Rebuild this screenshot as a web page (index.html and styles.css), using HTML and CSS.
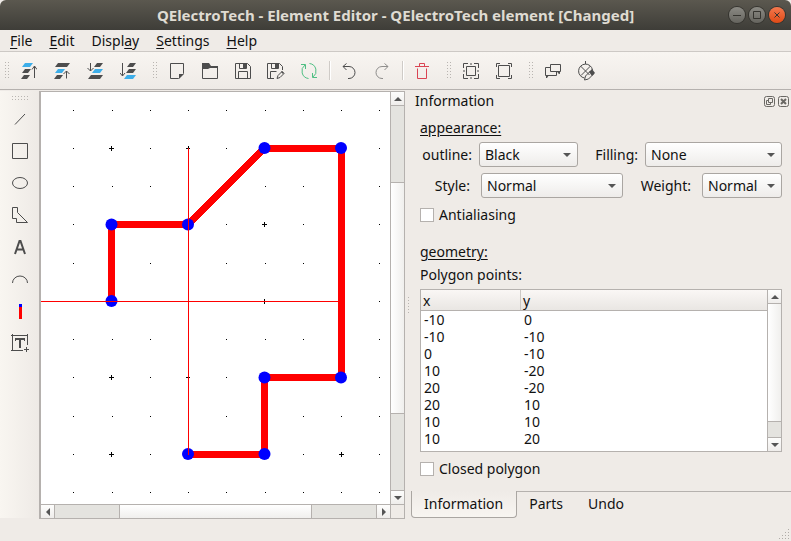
FILE: index.html
```
<!DOCTYPE html>
<html lang="en">
<head>
    <meta charset="UTF-8">
    <meta name="viewport" content="width=device-width, initial-scale=1.0">
    <title>QElectroTech - Element Editor</title>
    <link rel="stylesheet" href="styles.css">
</head>
<body>

    <header class="titlebar">
        <h1 class="title">QElectroTech - Element Editor - QElectroTech element [Changed]</h1>
        <div class="win-buttons">
            <button class="win-btn" aria-label="Minimize"><svg width="16" height="16"><path d="M4 8.5h8"/></svg></button>
            <button class="win-btn" aria-label="Maximize"><svg width="16" height="16"><path d="M4.500 4.500h7v7h-7z"/></svg></button>
            <button class="win-btn close" aria-label="Close"><svg width="16" height="16"><path d="M5.500 5.500l5 5M10.500 5.500l-5 5"/></svg></button>
        </div>
    </header>

    <nav class="menubar">
        <button><u>F</u>ile</button>
        <button><u>E</u>dit</button>
        <button>Displ<u>a</u>y</button>
        <button><u>S</u>ettings</button>
        <button><u>H</u>elp</button>
    </nav>

    <div class="toolbar">
        <span class="grip first"></span>
        <button class="tool" aria-label="Bring to front"><svg class="icon" viewBox="0 0 16 16"><path class="blue" d="M4 0h8l-3 4H1z"/><path class="dark" d="M4 6h6l-3 4H1zM3 12h6l-3 4H0z"/><path d="M13.500 15V3M11 6.500L13.500 3 16 6.500"/></svg></button>
        <button class="tool" aria-label="Raise"><svg class="icon" viewBox="0 0 16 16"><path class="dark" d="M4 0h12l-3 4H1zM3 12h6l-3 4H0z"/><path class="blue" d="M4 6h7l-3 4H1z"/><path d="M12.500 15.500V8M9.500 11l3-3 3 3"/></svg></button>
        <button class="tool" aria-label="Lower"><svg class="icon" viewBox="0 0 16 16"><path class="dark" d="M10 0h6l-3 4H7zM4 12h12l-3 4H1z"/><path class="blue" d="M8 6h8l-3 4H5z"/><path d="M3.500 0v8M.5 5l3 3 3-3"/></svg></button>
        <button class="tool" aria-label="Send to back"><svg class="icon" viewBox="0 0 16 16"><path class="dark" d="M10 0h6l-3 4H7zM9 6h7l-3 4H6z"/><path class="blue" d="M7 12h9l-3 4H4z"/><path d="M2.500 0v13M0 10l2.500 3L5 10"/></svg></button>
        <span class="grip"></span>
        <button class="tool" aria-label="New"><svg class="icon" viewBox="0 0 16 16"><path d="M1.500.5h13v10l-5 5h-8z"/><path class="dark" d="M10 11h5l-5 5z"/></svg></button>
        <button class="tool" aria-label="Open"><svg class="icon" viewBox="0 0 16 16"><path d="M.5.5v15h15v-12h-7"/><path class="dark" d="M0 0h7l2 3h7v2H8L6 6H0z"/></svg></button>
        <button class="tool" aria-label="Save"><svg class="icon" viewBox="0 0 16 16"><path d="M.5.5h12l3 3v12H.5zM4.500.5v5h7v-5M3.500 15.500v-7h9v7"/><path class="dark" d="M8 1h3v4H8z"/></svg></button>
        <button class="tool" aria-label="Save as"><svg class="icon save-as" viewBox="0 0 18 16"><path d="M7 15.500H.5V.5h12l3 3V7M4.500.5v5h7v-5M3.500 15.500v-7h6M10 15.500l1-3 4-4 2 2-4 4z"/><path class="dark" d="M8 1h3v4H8zM14 9l1-1 2 2-1 1z"/></svg></button>
        <button class="tool green" aria-label="Reload"><svg class="icon" viewBox="0 0 16 16"><path d="M8.500.5a7.500 7.500 0 0 1 3.500 13.500M11.500 10v4.500H16M7.500 15.500A7.500 7.500 0 0 1 4 2M4.500 6V1.500H0"/></svg></button>
        <span class="sep"></span>
        <button class="tool" aria-label="Undo"><svg class="icon" viewBox="0 0 16 16"><path d="M2 3.500h6a6 6 0 0 1 0 12H7M5.500.5l-3.500 3 3.500 3.500"/></svg></button>
        <button class="tool faded" aria-label="Redo"><svg class="icon" viewBox="0 0 16 16"><path d="M14 3.500H8a6 6 0 0 0 0 12h1M10.500.5l3.500 3-3.500 3.500"/></svg></button>
        <span class="sep"></span>
        <button class="tool red" aria-label="Delete"><svg class="icon" viewBox="0 0 16 16"><path d="M1 3.500h14M5.500 3V.5h5V3M3.500 5.500v10h9v-10"/></svg></button>
        <span class="grip"></span>
        <button class="tool" aria-label="Select all"><svg class="icon" viewBox="0 0 16 16"><path d="M.5 5V.5H5M11 .5h4.500V5M15.500 11v4.500H11M5 15.500H.5V11M3.500 3.500h9v9h-9zM7 1h2M7 15h2M1 7v2M15 7v2"/></svg></button>
        <button class="tool" aria-label="Deselect"><svg class="icon" viewBox="0 0 16 16"><path d="M.5 4V.5H4M12 .5h3.500V4M15.500 12v3.500H12M4 15.500H.5V12M2.500 2.500h11v11h-11z"/></svg></button>
        <span class="grip"></span>
        <button class="tool" aria-label="Names"><svg class="icon" viewBox="0 0 16 16"><path d="M5.500 1.500h10v7h-10zM5 4.500H.5v8h11V9M1.500 12v2M14 9v2"/><path class="dark" d="M1 12h3l-2 3H1zM12 9h3v2z"/></svg></button>
        <button class="tool" aria-label="Authors"><svg class="icon wide" viewBox="0 0 18 20"><path d="M8.500 0v3M15.500 9a7 7 0 1 0-8 8M3.500 5l9 9M13.500 5L4 14.500M7.500 19l1-4 5-5 3 3-5 5z"/><path class="dark" d="M12 11l3-3 3 4-3 3z"/></svg></button>
    </div>

    <main class="workspace">
        <div class="shapes">
            <span class="grip-h"></span>
            <button class="tool" aria-label="Line"><svg class="icon" viewBox="0 0 16 16"><path d="M3 13.500L13 3"/></svg></button>
            <button class="tool" aria-label="Rectangle"><svg class="icon" viewBox="0 0 16 16"><path d="M.5.5h15v15H.5z"/></svg></button>
            <button class="tool" aria-label="Ellipse"><svg class="icon" viewBox="0 0 16 16"><ellipse cx="8" cy="8" rx="7.500" ry="5.500"/></svg></button>
            <button class="tool" aria-label="Polygon"><svg class="icon" viewBox="0 0 16 16"><path d="M.5.5h5v5l10 10H4.500v-4h-4z"/></svg></button>
            <button class="tool" aria-label="Text"><svg class="icon" viewBox="0 0 16 16"><path class="thick" d="M3 15L7.500 2h1L13 15M4.500 10.500h7"/></svg></button>
            <button class="tool" aria-label="Arc"><svg class="icon" viewBox="0 0 16 16"><path d="M.5 12a7.500 7 0 0 1 15 0"/></svg></button>
            <button class="tool" aria-label="Terminal"><svg class="icon" viewBox="0 0 16 16"><path fill="#f00" stroke="none" d="M7 4h3v12H7z"/><path fill="#00f" stroke="none" d="M7 1h3v3H7z"/></svg></button>
            <button class="tool" aria-label="Text field"><svg class="icon big" viewBox="0 0 18 18"><path d="M0 1.500h17M1.500 0v17M0 16.500h12M16.500 0v11M13 15.500h5M15.500 13v5"/><path class="dark" d="M4 4h10v3h-1V6h-3v8H8V6H5v1H4z"/></svg></button>
        </div>

        <div class="editor">
            <svg class="canvas">
                <defs>
                    <path id="minor" d="M32 .5h1M71 .5h1M109 .5h1M147 .5h1M185 .5h1M224 .5h1M262 .5h1M300 .5h1M338 .5h1"/>
                    <path id="major" d="M32 .5h1M109 .5h1M185 .5h1M262 .5h1M338 .5h1M68 .5h5M70.500-2v5M145 .5h4M147-2v4M221 .5h5M223.500-2v5M298 .5h5M300.500-2v5"/>
                </defs>
                <g class="grid">
                    <use href="#minor" y="18"/>
                    <use href="#major" y="56"/>
                    <use href="#minor" y="94"/>
                    <use href="#major" y="132"/>
                    <use href="#minor" y="171"/>
                    <use href="#major" y="209"/>
                    <use href="#minor" y="247"/>
                    <use href="#major" y="285"/>
                    <use href="#minor" y="324"/>
                    <use href="#major" y="362"/>
                    <use href="#minor" y="400"/>
                </g>
                <path class="polygon" d="M70.500 209v-76.500H147L223.500 56H300v229.500h-76.500V362H147"/>
                <g class="handles">
                    <circle cx="70.500" cy="209" r="6"/>
                    <circle cx="70.500" cy="132.500" r="6"/>
                    <circle cx="147" cy="132.500" r="6"/>
                    <circle cx="223.500" cy="56" r="6"/>
                    <circle cx="300" cy="56" r="6"/>
                    <circle cx="300" cy="285.500" r="6"/>
                    <circle cx="223.500" cy="285.500" r="6"/>
                    <circle cx="223.500" cy="362" r="6"/>
                    <circle cx="147" cy="362" r="6"/>
                </g>
                <path class="axis" d="M0 209.500h300M147.500 56v307"/>
            </svg>
            <div class="scroll-v">
                <button class="arrow up" aria-label="Scroll up"></button>
                <div class="trough v"><div class="thumb"></div></div>
                <button class="arrow down" aria-label="Scroll down"></button>
            </div>
            <div class="scroll-h">
                <button class="arrow left" aria-label="Scroll left"></button>
                <div class="trough h"><div class="thumb"></div></div>
                <button class="arrow right" aria-label="Scroll right"></button>
            </div>
            <div class="corner"></div>
        </div>

        <div class="splitter"></div>

        <section class="dock">
            <div class="dock-title">
                <h2>Information</h2>
                <button class="dock-btn" aria-label="Float"><svg width="11" height="11"><rect x=".5" y=".5" width="10" height="10" rx="2"/><path d="M4.500 2.500h4v4h-4zM4 4.500H2.500v4h4V7"/></svg></button>
                <button class="dock-btn" aria-label="Close panel"><svg width="11" height="11"><rect x=".5" y=".5" width="10" height="10" rx="2"/><path class="cross" d="M3 3l5 5M8 3L3 8"/></svg></button>
            </div>

            <div class="panel">
                <h3>appearance:</h3>
                <div class="row colors">
                    <label for="outline">outline:</label>
                    <span class="combo"><select id="outline"><option>Black</option></select></span>
                    <label for="filling">Filling:</label>
                    <span class="combo"><select id="filling"><option>None</option></select></span>
                </div>
                <div class="row lines">
                    <label for="style">Style:</label>
                    <span class="combo"><select id="style"><option>Normal</option></select></span>
                    <label for="weight">Weight:</label>
                    <span class="combo"><select id="weight"><option>Normal</option></select></span>
                </div>
                <label class="check"><input type="checkbox">Antialiasing</label>

                <h3 class="geometry">geometry:</h3>
                <p class="caption">Polygon points:</p>
                <div class="points">
                    <table>
                        <thead>
                            <tr><th>x</th><th>y</th></tr>
                        </thead>
                        <tbody>
                            <tr><td>-10</td><td>0</td></tr>
                            <tr><td>-10</td><td>-10</td></tr>
                            <tr><td>0</td><td>-10</td></tr>
                            <tr><td>10</td><td>-20</td></tr>
                            <tr><td>20</td><td>-20</td></tr>
                            <tr><td>20</td><td>10</td></tr>
                            <tr><td>10</td><td>10</td></tr>
                            <tr><td>10</td><td>20</td></tr>
                        </tbody>
                    </table>
                    <div class="scroll-v">
                        <button class="arrow up" aria-label="Scroll up"></button>
                        <div class="trough list"><div class="thumb"></div></div>
                        <button class="arrow down" aria-label="Scroll down"></button>
                    </div>
                </div>
                <label class="check"><input type="checkbox">Closed polygon</label>
            </div>

            <div class="tabs">
                <button class="tab active">Information</button>
                <button class="tab">Parts</button>
                <button class="tab">Undo</button>
            </div>
        </section>
    </main>

    <footer class="statusbar">
        <svg width="12" height="12"><path d="M10 1.500h1M7 4.500h1M10 4.500h1M4 7.500h1M7 7.500h1M10 7.500h1M1 10.500h1M4 10.500h1M7 10.500h1M10 10.500h1"/></svg>
    </footer>

</body>
</html>
```

FILE: styles.css
```
* {
    box-sizing: border-box;
}

body {
    margin: 0;
    min-height: 100vh;
    display: flex;
    flex-direction: column;
    background: #efebe7;
    color: #111;
    font: 14px/20px "Noto Sans", "Open Sans", sans-serif;
}

button {
    margin: 0;
    padding: 0;
    border: 0;
    background: none;
    color: inherit;
    font: inherit;
}

svg {
    display: block;
    fill: none;
    stroke: #4d4d4d;
}

h2, h3, p {
    margin: 0;
    font-size: 14px;
    font-weight: 400;
}

/* title bar */
.titlebar {
    display: grid;
    grid-template-columns: 64px 1fr 64px;
    align-items: center;
    height: 30px;
    padding-right: 6px;
    border-radius: 6px 6px 0 0;
    background: linear-gradient(#5b584f, #3e3d38);
}

.title {
    grid-column: 2;
    margin: 0;
    padding-left: 6px;
    color: #dfdbd2;
    font-size: 15px;
    line-height: 20px;
    text-align: center;
    white-space: nowrap;
}

.win-buttons {
    display: flex;
    justify-content: flex-end;
    gap: 4px;
}

.win-btn {
    width: 16px;
    height: 16px;
    border-radius: 50%;
    background: linear-gradient(#8b8a84, #65645e);
    box-shadow: 0 0 0 1px #35342f;
}

.win-btn svg {
    stroke: #35342f;
}

.win-btn.close {
    background: linear-gradient(#f4784e, #df4a16);
}

/* menus */
.menubar {
    display: flex;
    gap: 17px;
    height: 22px;
    padding: 1px 10px 0;
    border-bottom: 1px solid #cdc9c5;
}

.menubar u {
    text-underline-offset: 2px;
}

/* toolbars */
.toolbar {
    display: flex;
    align-items: center;
    gap: 1px;
    height: 38px;
    border-bottom: 1px solid #b5b1ae;
    background: linear-gradient(#f8f5f1, #eeeae6);
}

.tool {
    display: flex;
    align-items: center;
    justify-content: center;
    flex: none;
    width: 32px;
    height: 32px;
}

.icon {
    width: 16px;
    height: 16px;
}

.icon.big {
    width: 18px;
    height: 18px;
}

.icon.wide {
    width: 18px;
    height: 20px;
}

.icon.save-as {
    width: 18px;
}

.dark {
    fill: #4d4d4d;
    stroke: none;
}

.blue {
    fill: #3daee9;
    stroke: none;
}

.thick {
    stroke-width: 2;
}

.green svg {
    stroke: #4fbf83;
}

.red svg {
    stroke: #da4453;
}

.faded {
    opacity: 0.6;
}

.grip {
    width: 15px;
    height: 17px;
    padding: 0 2px 0 8px;
    background: conic-gradient(from 270deg at 1px 1px, #b9b5b1 90deg, transparent 0) 0 0 / 3px 3px content-box;
}

.grip.first {
    width: 12px;
    padding-left: 5px;
}

.sep {
    width: 6px;
    height: 19px;
    padding: 0 1px 0 3px;
    background: linear-gradient(90deg, #cfcbc7 1px, #fff 1px) content-box;
}

.workspace {
    flex: 1;
    display: flex;
    padding-top: 1px;
}

.shapes {
    display: flex;
    flex-direction: column;
    align-items: center;
    width: 39px;
    margin-bottom: 1px;
    padding-left: 1px;
    background: linear-gradient(90deg, #f9f6f1, #eeeae6);
}

.grip-h {
    width: 17px;
    height: 12px;
    padding: 5px 0 3px;
    background: conic-gradient(from 270deg at 1px 1px, #b9b5b1 90deg, transparent 0) 0 0 / 3px 3px content-box;
}

/* drawing area */
.editor {
    flex: 1;
    display: grid;
    grid-template-columns: 1fr 14px;
    grid-template-rows: 1fr 14px;
    border: 1px solid #b5b1ae;
    border-left-width: 2px;
    background: #fff;
}

.canvas {
    width: 100%;
    height: 100%;
    min-height: 411px;
}

.grid {
    stroke: #000;
    shape-rendering: crispEdges;
}

.polygon {
    stroke: #f00;
    stroke-width: 7;
    shape-rendering: crispEdges;
}

.handles {
    fill: #00f;
    stroke: none;
}

.axis {
    stroke: #f00;
}

/* scroll bars */
.scroll-v, .scroll-h {
    display: flex;
    border: 0 solid #b5b1ae;
}

.scroll-v {
    flex-direction: column;
    width: 14px;
    border-left-width: 1px;
}

.scroll-h {
    height: 14px;
    border-top-width: 1px;
}

.corner {
    border: 1px solid #b5b1ae;
    border-width: 1px 0 0 1px;
    background: #efebe7;
}

.arrow {
    display: flex;
    align-items: center;
    justify-content: center;
    flex: none;
    width: 13px;
    height: 13px;
    background: linear-gradient(#fdfdfc, #efedeb);
}

.arrow::before {
    content: "";
    border: 4px solid transparent;
}

.up::before {
    border-top: 0;
    border-bottom-color: #555;
}

.down::before {
    border-bottom: 0;
    border-top-color: #555;
}

.left::before {
    border-left: 0;
    border-right-color: #555;
}

.right::before {
    border-right: 0;
    border-left-color: #555;
}

.trough {
    flex: 1;
    display: grid;
    border: 0 solid #b5b1ae;
    background: #e4e3df;
}

.trough.v {
    grid-template-rows: 76fr 232fr 76fr;
    border-width: 1px 0;
}

.trough.h {
    grid-template-columns: 64fr 194fr 64fr;
    border-width: 0 1px;
}

.trough.list {
    grid-template-rows: 0 118fr 15fr;
    border-width: 1px 0;
}

.thumb {
    border: 0 solid #b5b1ae;
}

.v .thumb, .list .thumb {
    grid-row: 2;
    border-width: 1px 0;
    background: linear-gradient(90deg, #fff, #f0efed);
}

.list .thumb {
    border-top-width: 0;
}

.h .thumb {
    grid-column: 2;
    border-width: 0 1px;
    background: linear-gradient(#fff, #f0efed);
}

.splitter {
    width: 6px;
    background: repeating-linear-gradient(#b9b5b1 0 1px, transparent 1px 3px) 50% 50% / 1px 16px no-repeat;
}

/* information dock */
.dock {
    display: flex;
    flex-direction: column;
    flex: none;
    width: 380px;
}

.dock-title {
    display: flex;
    align-items: center;
    gap: 3px;
    height: 20px;
    padding: 0 2px 0 4px;
}

.dock-title h2 {
    flex: 1;
}

.dock-btn svg {
    stroke: #6a6864;
}

.dock-btn .cross {
    stroke-width: 2;
}

.panel {
    flex: 1;
    padding: 7px 9px 0;
}

h3 {
    text-decoration: underline;
    text-underline-offset: 2px;
}

.row {
    display: flex;
    align-items: center;
    height: 25px;
    margin-top: 6px;
}

.row label {
    flex: none;
    text-align: right;
    white-space: nowrap;
}

.row .combo:last-child {
    flex: 1;
}

.colors {
    gap: 6px;
    margin-top: 4px;
}

.colors label {
    width: 53px;
    padding-right: 1px;
}

.colors label ~ label {
    width: 55px;
}

.colors .combo {
    width: 99px;
}

.lines {
    gap: 10px;
}

.lines label {
    width: 51px;
    padding-right: 1px;
}

.lines label ~ label {
    width: 59px;
}

.lines .combo {
    width: 142px;
}

.combo {
    position: relative;
}

.combo::after {
    content: "";
    position: absolute;
    top: 11px;
    right: 7px;
    border: 4px solid transparent;
    border-bottom: 0;
    border-top-color: #555;
    pointer-events: none;
}

select {
    display: block;
    width: 100%;
    height: 25px;
    margin: 0;
    padding: 0 5px;
    appearance: none;
    border: 1px solid #aaa6a2;
    border-radius: 3px;
    background: linear-gradient(#fff, #eeecea);
    color: inherit;
    font: inherit;
}

.check {
    display: flex;
    align-items: center;
    gap: 5px;
    height: 20px;
    margin-top: 7px;
}

.check input {
    width: 14px;
    height: 14px;
    margin: 0;
    appearance: none;
    border: 1px solid #b5b1ae;
    background: #fff;
}

.geometry {
    margin-top: 17px;
}

.caption {
    margin: 3px 0 4px;
}

.points {
    display: flex;
    height: 163px;
    border: 1px solid #b5b1ae;
    background: #fff;
}

.points table {
    flex: 1;
    display: block;
}

.points thead, .points tbody {
    display: block;
}

.points thead {
    border-bottom: 1px solid #b5b1ae;
    background: linear-gradient(#faf7f5, #e9e6e3);
}

.points tr {
    display: grid;
    grid-template-columns: 100px 1fr;
}

.points th {
    height: 20px;
    padding: 1px 2px 0;
    font-weight: 400;
    line-height: 20px;
    text-align: left;
}

.points th:first-child {
    border-right: 1px solid #cdc9c5;
}

.points td {
    padding: 0 3px;
    line-height: 17px;
}

.tabs {
    display: flex;
    align-items: flex-start;
    height: 28px;
    background: linear-gradient(#b5b1ae, #b5b1ae) 0 0 / 100% 1px no-repeat;
}

.tab {
    height: 26px;
    padding: 0 13px 0 12px;
}

.tab.active {
    height: 27px;
    border: 1px solid #aaa6a2;
    border-top: 0;
    border-radius: 0 0 4px 4px;
    background: linear-gradient(#efebe7, #f8f5f1);
}

.statusbar {
    display: flex;
    align-items: flex-end;
    justify-content: flex-end;
    height: 22px;
    padding: 0 1px 1px 0;
}

.statusbar svg {
    stroke: #b0aca8;
}
```
